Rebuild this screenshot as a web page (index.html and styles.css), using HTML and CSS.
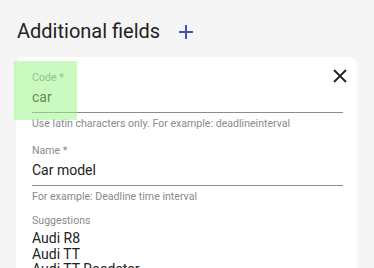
FILE: index.html
```html
<!DOCTYPE html>
<html lang="en">
<head>
  <meta charset="UTF-8">
  <title>Additional fields</title>
  <link rel="stylesheet" href="styles.css">
</head>
<body>
  <div class="titulo">
    <h2>Additional fields</h2>
    <button class="agregar" aria-label="Add">
      <svg width="16" height="16" viewBox="0 0 16 16"><path d="M8 1v14M1 8h14" stroke="#3f51b5" stroke-width="2"/></svg>
    </button>
  </div>

  <div class="tarjeta">
    <button class="cerrar" aria-label="Close">
      <svg width="14" height="14" viewBox="0 0 14 14"><path d="M1 1l12 12M13 1L1 13" stroke="#222" stroke-width="1.8"/></svg>
    </button>

    <div class="campo">
      <label>Code *</label>
      <div class="valor">car</div>
      <p class="ayuda">Use latin characters only. For example: deadlineinterval</p>
    </div>

    <div class="campo">
      <label>Name *</label>
      <div class="valor">Car model</div>
      <p class="ayuda">For example: Deadline time interval</p>
    </div>

    <div class="sugerencias">
      <label>Suggestions</label>
      <ul>
        <li>Audi R8</li>
        <li>Audi TT</li>
        <li>Audi TT Roadster</li>
      </ul>
    </div>

    <div class="resaltado"></div>
  </div>
</body>
</html>
```

FILE: styles.css
```css
body {
  margin: 0;
  background: #f5f5f5;
  font-family: Roboto, 'Noto Sans', sans-serif;
  color: #212121;
  height: 268px;
  overflow: hidden;
}
.titulo {
  display: flex;
  align-items: center;
  gap: 18px;
  padding: 18px 17px 0;
  height: 26px;
}
.titulo h2 {
  margin: 0;
  font-size: 20px;
  font-weight: 400;
  color: #222;
}
.agregar {
  background: none;
  border: none;
  padding: 0;
  display: flex;
  margin-top: 2px;
}
.tarjeta {
  position: relative;
  margin: 13px 17px 0 16px;
  background: white;
  border-radius: 8px;
  padding: 14px 14px 0 16px;
}
.cerrar {
  position: absolute;
  top: 12px;
  right: 10px;
  background: none;
  border: none;
  padding: 0;
  display: flex;
}
.campo {
  margin-bottom: 13px;
}
.campo label, .sugerencias label {
  display: block;
  font-size: 10.6px;
  color: #8a8a8a;
  line-height: 14px;
}
.campo .valor {
  font-size: 14px;
  line-height: 20px;
  padding: 2px 0 5px;
  border-bottom: 1px solid #8c8c8c;
  color: #222;
}
.campo .ayuda {
  margin: 4px 0 0;
  font-size: 10.6px;
  line-height: 14px;
  color: #8a8a8a;
}
.sugerencias {
  margin-top: -3px;
}
.sugerencias ul {
  list-style: none;
  margin: 3px 0 0;
  padding: 0;
}
.sugerencias li {
  font-size: 14px;
  line-height: 15.5px;
  color: #222;
}
.resaltado {
  position: absolute;
  left: -2px;
  top: 4px;
  width: 63px;
  height: 59px;
  background: rgba(150, 245, 130, 0.5);
  pointer-events: none;
}
```
